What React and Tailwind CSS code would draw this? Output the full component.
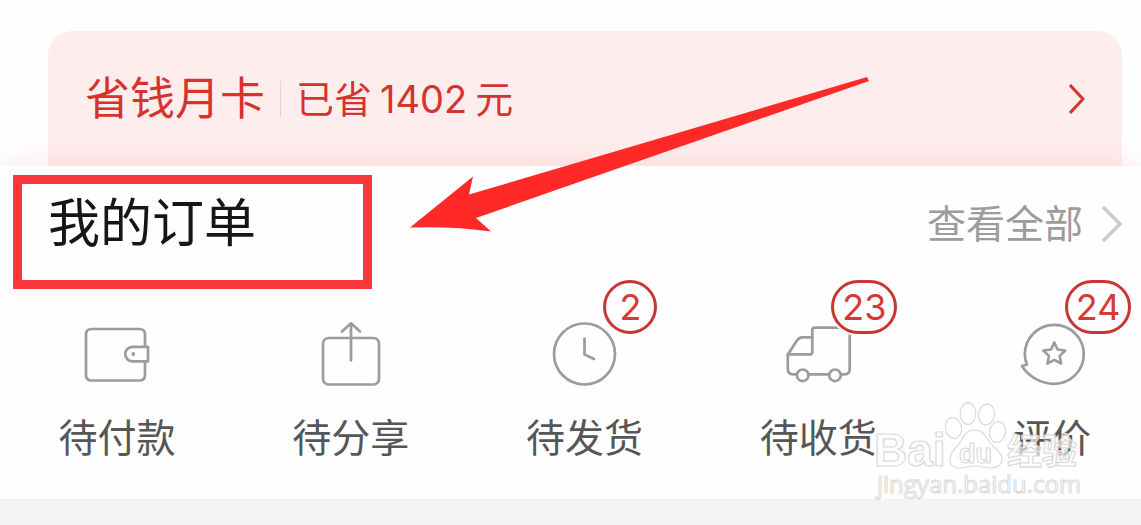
const WalletIcon = () => (
  <>
    <path d="M60 24V12.5Q60 7 54.5 7H6.500Q1 7 1 12.5V53Q1 58.500 6.500 58.500H54.500Q60 58.500 60 53V40" />
    <path d="M63 24.800H47.500a7.300 7.300 0 0 0 0 14.600H63Z" />
    <circle cx="48.300" cy="32" r="1.900" fill="currentColor" stroke="none" />
  </>
);

const ShareIcon = () => (
  <>
    <rect x="4" y="16" width="56" height="46.500" rx="5.500" />
    <path d="M32 38.500V1.500M23 9.500L32 1.200L41 9.500" />
  </>
);

const ClockIcon = () => (
  <>
    <circle cx="32.500" cy="32" r="30.500" />
    <path d="M32.500 16.500V32.500L42 37" />
  </>
);

const TruckIcon = () => (
  <>
    <path d="M10.500 52.300H7Q1.800 52.300 1.800 47V32.500L11 18.500Q13 15.300 16 15.300H26.300" />
    <path d="M1.800 32.300H24Q26.300 32.300 26.300 30V8Q26.300 5.700 28.500 5.700H61.500Q63.700 5.700 63.700 8V47Q63.700 52.300 58.500 52.300H55M22.500 52.300H43" />
    <circle cx="16.700" cy="53.300" r="5.800" />
    <circle cx="49" cy="53.300" r="5.800" />
  </>
);

const ReviewIcon = () => (
  <>
    <path d="M7 42.500C5.500 39 4.800 36 4.800 32.300A29.500 29.500 0 1 1 34.300 61.800C21 61.800 8.500 54.500 2 44Z" />
    <path d="M34.300 20.500L37.600 27.500L45.200 28.500L39.700 33.900L41.100 41.500L34.300 37.900L27.500 41.500L28.900 33.900L23.400 28.500L31 27.500Z" />
  </>
);

const ORDER_STATES = [
  { label: '待付款', Icon: WalletIcon },
  { label: '待分享', Icon: ShareIcon },
  { label: '待发货', Icon: ClockIcon, count: 2 },
  { label: '待收货', Icon: TruckIcon, count: 23 },
  { label: '评价', Icon: ReviewIcon, count: 24 },
];

const OrderState = ({ label, Icon, count }) => (
  <a href="#" className="flex flex-col items-center pt-10 pb-[35px]">
    <span className="relative">
      <svg
        viewBox="0 0 64 64"
        className="block size-16 overflow-visible text-[#9c9c9c]"
        fill="none"
        stroke="currentColor"
        strokeWidth="2.7"
        strokeLinecap="round"
        strokeLinejoin="round"
        aria-hidden="true"
      >
        <Icon />
      </svg>
      {count && (
        <span className={`absolute -top-[42px] flex h-[54px] items-center justify-center rounded-full border-3 border-[#c93632] bg-[#fefefe] text-[36px] leading-none text-[#d63a34] ring-2 ring-[#fefefe] ${
          count > 9 ? 'left-[45px] w-[66px]' : 'left-[51px] w-[54px]'
        }`}>{count}</span>
      )}
    </span>
    <span className="mt-[26px] text-[39px] leading-[52px] text-[#555658]">{label}</span>
  </a>
);

const SavingsBanner = () => (
  <a
    href="#"
    className="ml-12 mr-[19px] mt-[31px] flex h-[135px] items-center justify-between rounded-t-[24px] bg-[#fdeeed] pl-[37px] pr-[37px] text-[#d5342e]"
  >
    <span className="flex items-center">
      <span className="text-[45px] leading-[52px]">省钱月卡</span>
      <span className="mx-[15px] h-9 w-px bg-[#f0cfcd]" />
      <span className="flex items-center gap-2 text-[38px] leading-[52px]">
        <span>已省</span>
        <span>1402</span>
        <span>元</span>
      </span>
    </span>
    <svg viewBox="0 0 16 30" className="h-[30px] w-4" fill="none" stroke="currentColor" strokeWidth="3" aria-hidden="true">
      <path d="M1 1L14 15L1 29" />
    </svg>
  </a>
);

const Arrow = () => (
  <svg
    viewBox="0 0 460 158"
    className="pointer-events-none absolute left-[410px] top-[76px] z-20 h-[158px] w-[460px]"
    aria-hidden="true"
  >
    <path d="M0 151.500L63 100.500L59 118.500L457 1L459 5L66 142L81 155.500Q42 150 0 151.500Z" fill="#ff2a28" />
  </svg>
);

const Watermark = () => (
  <svg
    viewBox="0 0 210 105"
    className="pointer-events-none absolute right-[57px] top-[398px] z-20 h-[105px] w-[210px] font-['Open_Sans','Noto_Sans_CJK_SC',sans-serif]"
    fill="#ffffff"
    fillOpacity="0.6"
    stroke="#dadada"
    strokeWidth="1.2"
    aria-hidden="true"
  >
    <text x="0" y="68" fontSize="46" fontWeight="700" fontFamily="Liberation Sans">Bai</text>
    <ellipse cx="79.500" cy="30" rx="8" ry="10.500" transform="rotate(-10 79.500 30)" />
    <ellipse cx="94" cy="15.500" rx="7.800" ry="10.800" />
    <ellipse cx="112.500" cy="16.500" rx="8" ry="10.500" transform="rotate(10 112.500 16.500)" />
    <ellipse cx="123.500" cy="34" rx="8" ry="10.500" transform="rotate(8 123.500 34)" />
    <path d="M101 32C91 32 89 40 85 46C80 52 76 55 76 62C76 67 80 70 85 70C91 70 95 68 101 68C107 68 111 70 117 70C123 70 128 67 128 61C128 54 121 51 117 46C112 40 110 32 101 32Z" />
    <text x="85" y="65" fontSize="27" fontWeight="700" fontFamily="Liberation Sans">du</text>
    <text x="133" y="66" fontSize="35" fontWeight="700">经验</text>
    <text x="3" y="95" fontSize="24" strokeWidth="1">jingyan.baidu.com</text>
  </svg>
);

const App = () => (
  <main className="relative min-h-screen overflow-hidden bg-[#f3f3f3] font-[Inter,'Noto_Sans_CJK_SC',sans-serif]">
    <div className="flow-root bg-[#fefefe]">
      <SavingsBanner />
    </div>

    <section className="relative bg-[#fefefe] shadow-[0_0_28px_rgba(215,60,50,0.12)]">
      <header className="flex h-[116px] items-center justify-between pl-12 pr-[19px]">
        <h1 className="text-[52px] leading-[60px] text-[#151617]">我的订单</h1>
        <a href="#" className="flex items-center gap-[19px] text-[39px] leading-[52px] text-[#9c9c9c]">
          查看全部
          <svg viewBox="0 0 20 36" className="h-9 w-5" fill="none" stroke="#cacaca" strokeWidth="3.5" strokeLinecap="round" aria-hidden="true">
            <path d="M2 2L18 18L2 34" />
          </svg>
        </a>
      </header>

      <nav aria-label="我的订单" className="-mr-7 grid grid-cols-5">
        {ORDER_STATES.map((s) => <OrderState key={s.label} {...s} />)}
      </nav>
    </section>

    {/* gap before the next section, covers the lower half of the shadow */}
    <div className="relative h-[26px] bg-[#f3f3f3]" />

    <div className="pointer-events-none absolute left-[13px] top-[175px] z-10 h-[114px] w-[359px] border-9 border-[#f9373b]" />
    <Arrow />
    <Watermark />
  </main>
);

export default App;
